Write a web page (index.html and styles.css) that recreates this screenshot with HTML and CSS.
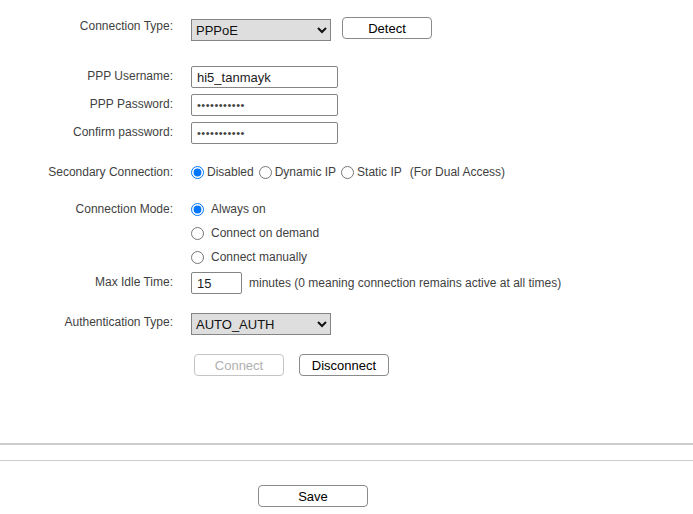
FILE: index.html
```html
<!DOCTYPE html>
<html>
<head>
<meta charset="utf-8">
<link rel="stylesheet" href="styles.css">
</head>
<body>
<form class="page">
  <div class="row row-type">
    <div class="lbl">Connection Type:</div>
    <div class="ctl">
      <select class="sel"><option>PPPoE</option></select>
      <button type="button" class="btn detect">Detect</button>
    </div>
  </div>

  <div class="row row-field first-field">
    <div class="lbl">PPP Username:</div>
    <div class="ctl"><input class="txt" type="text" value="hi5_tanmayk"></div>
  </div>
  <div class="row row-field">
    <div class="lbl">PPP Password:</div>
    <div class="ctl"><input class="txt pw" type="password" value="12345678901"></div>
  </div>
  <div class="row row-field">
    <div class="lbl">Confirm password:</div>
    <div class="ctl"><input class="txt pw" type="password" value="12345678901"></div>
  </div>

  <div class="row row-sec">
    <div class="lbl">Secondary Connection:</div>
    <div class="ctl radios">
      <label class="opt"><input type="radio" name="sec" checked>Disabled</label>
      <label class="opt"><input type="radio" name="sec">Dynamic IP</label>
      <label class="opt"><input type="radio" name="sec">Static IP</label>
      <span class="note">(For Dual Access)</span>
    </div>
  </div>

  <div class="row row-mode first-mode">
    <div class="lbl">Connection Mode:</div>
    <div class="ctl"><label class="mopt"><input type="radio" name="mode" checked>Always on</label></div>
  </div>
  <div class="row row-mode">
    <div class="lbl"></div>
    <div class="ctl"><label class="mopt"><input type="radio" name="mode">Connect on demand</label></div>
  </div>
  <div class="row row-mode">
    <div class="lbl"></div>
    <div class="ctl"><label class="mopt"><input type="radio" name="mode">Connect manually</label></div>
  </div>

  <div class="row row-idle">
    <div class="lbl">Max Idle Time:</div>
    <div class="ctl idle">
      <input class="txt short" type="text" value="15">
      <span class="hint">minutes (0 meaning connection remains active at all times)</span>
    </div>
  </div>

  <div class="row row-auth">
    <div class="lbl">Authentication Type:</div>
    <div class="ctl"><select class="sel"><option>AUTO_AUTH</option></select></div>
  </div>

  <div class="row row-btns">
    <div class="lbl"></div>
    <div class="ctl btns">
      <button type="button" class="btn" disabled>Connect</button>
      <button type="button" class="btn">Disconnect</button>
    </div>
  </div>

  <div class="line thick"></div>
  <div class="line thin"></div>

  <div class="save-row">
    <button type="button" class="btn save">Save</button>
  </div>
</form>
</body>
</html>
```

FILE: styles.css
```css
html, body {
  margin: 0;
  padding: 0;
  background: #fff;
}
body {
  font-family: "Liberation Sans", Arial, sans-serif;
  font-size: 12px;
  color: #3f3f3f;
}
.page {
  padding-top: 17px;
}
.row {
  display: grid;
  grid-template-columns: 173px 1fr;
  column-gap: 18px;
}
.lbl {
  text-align: right;
  line-height: 14px;
  white-space: nowrap;
}
.ctl {
  display: flex;
  align-items: flex-start;
}
.row-type {
  height: 24px;
}
.row-type .lbl {
  padding-top: 2px;
}
.row-type .sel {
  margin-top: 2px;
}
.sel {
  width: 140px;
  height: 22px;
  margin: 0;
  padding: 0;
  background-color: #dedede;
  border: 1px solid #858585;
  border-radius: 0;
  font-family: "Liberation Sans", Arial, sans-serif;
  font-size: 13px;
  color: #111;
}
.btn {
  width: 90px;
  height: 22px;
  margin: 0;
  padding: 0;
  background: #fff;
  border: 1px solid #8a8a8a;
  border-radius: 4px;
  font-family: "Liberation Sans", Arial, sans-serif;
  font-size: 13px;
  color: #000;
}
.btn:disabled {
  color: #b0b0b0;
  border-color: #c4c4c4;
}
.detect {
  margin-left: 11px;
}
.row-field {
  height: 22px;
  margin-top: 6px;
}
.row-field.first-field {
  margin-top: 25px;
}
.row-field .lbl,
.row-idle .lbl,
.row-auth .lbl {
  padding-top: 3px;
}
.row-auth .lbl {
  padding-top: 2px;
}
.txt {
  box-sizing: border-box;
  width: 147px;
  height: 22px;
  margin: 0;
  padding: 0 5px;
  border: 1px solid #858585;
  border-radius: 2px;
  font-family: "Liberation Sans", Arial, sans-serif;
  font-size: 13px;
  color: #222;
  outline: none;
}
.txt.pw {
  font-size: 11px;
  color: #444;
  letter-spacing: 0.5px;
}
.txt.short {
  width: 51px;
}
.row-sec {
  margin-top: 20px;
  height: 16px;
}
.row-sec .lbl {
  line-height: 16px;
}
.radios {
  align-items: center;
  height: 16px;
  line-height: 16px;
}
.opt {
  display: inline-flex;
  align-items: center;
  margin-right: 5px;
}
.opt input {
  width: 13px;
  height: 13px;
  margin: 0 3px 0 0;
}
.note {
  margin-left: 3px;
}
.row-mode {
  height: 24px;
}
.row-mode.first-mode {
  margin-top: 17px;
}
.row-mode .lbl {
  line-height: 24px;
}
.mopt {
  display: inline-flex;
  align-items: center;
  height: 24px;
}
.mopt input {
  width: 13px;
  height: 13px;
  margin: 0 7px 0 0;
}
.row-idle {
  margin-top: 3px;
  height: 22px;
}
.idle {
  align-items: center;
}
.hint {
  margin-left: 7px;
}
.row-auth {
  margin-top: 19px;
  height: 22px;
}
.row-btns {
  margin-top: 19px;
  height: 22px;
}
.btns {
  padding-left: 3px;
  gap: 15px;
}
.line {
  width: 100%;
}
.line.thick {
  margin-top: 67px;
  height: 2px;
  background: #cccccc;
}
.line.thin {
  margin-top: 15px;
  height: 1px;
  background: #cccccc;
}
.save-row {
  padding-top: 24px;
  padding-left: 258px;
}
.save {
  width: 110px;
}
```
